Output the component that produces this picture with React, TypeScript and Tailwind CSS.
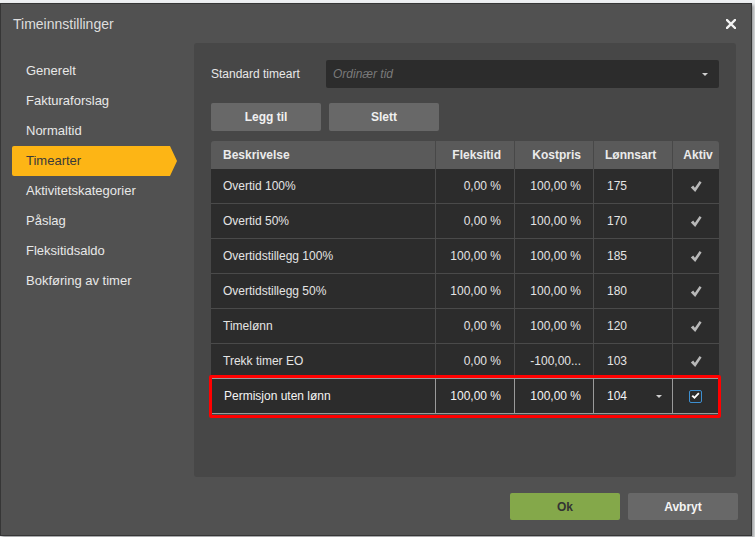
const menu = [
  "Generelt",
  "Fakturaforslag",
  "Normaltid",
  "Timearter",
  "Aktivitetskategorier",
  "Påslag",
  "Fleksitidsaldo",
  "Bokføring av timer",
];

const rows = [
  { name: "Overtid 100%", flex: "0,00 %", kost: "100,00 %", lonn: "175" },
  { name: "Overtid 50%", flex: "0,00 %", kost: "100,00 %", lonn: "170" },
  { name: "Overtidstillegg 100%", flex: "100,00 %", kost: "100,00 %", lonn: "185" },
  { name: "Overtidstillegg 50%", flex: "100,00 %", kost: "100,00 %", lonn: "180" },
  { name: "Timelønn", flex: "0,00 %", kost: "100,00 %", lonn: "120" },
  { name: "Trekk timer EO", flex: "0,00 %", kost: "-100,00...", lonn: "103" },
];

function Caret() {
  return (
    <svg width="6" height="3" viewBox="0 0 6 3" className="shrink-0">
      <path d="M0 0H6L3 3Z" fill="#d0d0d0" />
    </svg>
  );
}

function Check() {
  return (
    <svg width="12" height="13" viewBox="0 0 12 13">
      <path d="M0.8 7.4L3.2 5.4L4.9 7.8L9.6 1L11.6 2.6L5.2 12Z" fill="#b8b8b8" />
    </svg>
  );
}

export default function App() {
  return (
    <div
      className="w-[755px] h-[537px] bg-[#eef0f2] pt-[3px] overflow-hidden"
      style={{ fontFamily: '"Liberation Sans", Arial, sans-serif' }}
    >
      <div className="w-[752px] h-[533px] bg-[#515151] border border-[#363636] shadow-[2px_2px_3px_rgba(0,0,0,0.35)] flex flex-col">
        {/* title */}
        <div className="h-[39px] flex items-center justify-between pl-[12px] pr-[15px] shrink-0">
          <span className="text-[14px] text-[#dedede] mt-[1px]">Timeinnstillinger</span>
          <svg width="10" height="10" viewBox="0 0 10 10">
            <path d="M1 1L9 9M9 1L1 9" stroke="#f2f2f2" strokeWidth="2.4" strokeLinecap="square" />
          </svg>
        </div>

        <div className="flex shrink-0">
          {/* sidebar */}
          <div className="w-[193px] pt-[13px] pl-[11px] flex flex-col">
            {menu.map((m) =>
              m === "Timearter" ? (
                <div key={m} className="relative h-[30px] w-[158px] flex items-center pl-[14px] bg-[#fdb515] rounded-l-[2px] text-[13px] text-[#3a3a3a]">
                  {m}
                  <div className="absolute right-[-7px] top-0 w-0 h-0 border-y-[15px] border-y-transparent border-l-[7px] border-l-[#fdb515]" />
                </div>
              ) : (
                <div key={m} className="h-[30px] flex items-center pl-[14px] text-[13px] text-[#e8e8e8]">
                  {m}
                </div>
              )
            )}
          </div>

          {/* panel */}
          <div className="w-[542px] h-[434px] bg-[#474747] rounded-[3px] pt-[17px] pl-[17px] pr-[17px]">
            <div className="flex items-center h-[28px]">
              <span className="w-[115px] text-[12px] text-[#e8e8e8]">Standard timeart</span>
              <div className="flex-1 h-[28px] bg-[#2c2c2c] rounded-[2px] flex items-center justify-between pl-[7px] pr-[11px]">
                <span className="text-[12px] italic text-[#7a7a7a]">Ordinær tid</span>
                <Caret />
              </div>
            </div>

            <div className="flex gap-[8px] mt-[15px]">
              <div className="w-[110px] h-[28px] bg-[#686868] rounded-[2px] flex items-center justify-center text-[12px] font-bold text-[#f0f0f0]">
                Legg til
              </div>
              <div className="w-[110px] h-[28px] bg-[#686868] rounded-[2px] flex items-center justify-center text-[12px] font-bold text-[#f0f0f0]">
                Slett
              </div>
            </div>

            <div className="mt-[10px] w-[508px] text-[12px]">
              <div className="h-[28px] flex bg-[#5a5a5a] rounded-t-[3px] font-bold text-[#ebebeb]">
                <div className="w-[224px] flex items-center pl-[12px]">Beskrivelse</div>
                <div className="w-[79px] flex items-center justify-end pr-[13px] border-l border-[#484848]">Fleksitid</div>
                <div className="w-[79px] flex items-center justify-end pr-[12px] border-l border-[#484848]">Kostpris</div>
                <div className="w-[79px] flex items-center pl-[11px] border-l border-[#484848]">Lønnsart</div>
                <div className="w-[47px] flex items-center justify-center pl-[4px] border-l border-[#484848]">Aktiv</div>
              </div>

              {rows.map((r, i) => (
                <div
                  key={r.name}
                  className={`flex bg-[#2c2c2c] text-[#e4e4e4] ${i < rows.length - 1 ? "h-[35px] border-b border-[#4a4a4a]" : "h-[34px]"}`}
                >
                  <div className="w-[224px] flex items-center pl-[12px]">{r.name}</div>
                  <div className="w-[79px] flex items-center justify-end pr-[13px] border-l border-[#4a4a4a]">{r.flex}</div>
                  <div className="w-[79px] flex items-center justify-end pr-[12px] border-l border-[#4a4a4a]">{r.kost}</div>
                  <div className="w-[79px] flex items-center pl-[13px] border-l border-[#4a4a4a]">{r.lonn}</div>
                  <div className="w-[47px] flex items-center justify-center border-l border-[#4a4a4a]">
                    <Check />
                  </div>
                </div>
              ))}

              {/* row in edit mode */}
              <div className="relative flex h-[36px] bg-[#2c2c2c] text-[#f4f4f4] border border-[#9a9a9a]">
                <div className="w-[223px] flex items-center pl-[12px]">Permisjon uten lønn</div>
                <div className="w-[79px] flex items-center justify-end pr-[13px] border-l border-[#9a9a9a]">100,00 %</div>
                <div className="w-[79px] flex items-center justify-end pr-[12px] border-l border-[#9a9a9a]">100,00 %</div>
                <div className="w-[79px] flex items-center justify-between pl-[13px] pr-[10px] border-l border-[#9a9a9a]">
                  104
                  <Caret />
                </div>
                <div className="w-[46px] flex items-center justify-center border-l border-[#9a9a9a]">
                  <div className="w-[13px] h-[13px] rounded-[2px] border-[1.5px] border-[#3d8fd0] flex items-center justify-center">
                    <svg width="9" height="8" viewBox="0 0 9 8">
                      <path d="M0.5 4.2L2 3L3.4 4.6L7.2 0.5L8.5 1.7L3.5 7Z" fill="#ffffff" />
                    </svg>
                  </div>
                </div>
                <div className="absolute left-[-3px] right-[-3px] top-[-4px] bottom-[-5px] border-[3px] border-[#ff0000] rounded-[2px] pointer-events-none" />
              </div>
            </div>
          </div>
        </div>

        {/* footer */}
        <div className="flex justify-end gap-[8px] pr-[13px] mt-[16px]">
          <div className="w-[110px] h-[27px] bg-[#84a84a] rounded-[2px] flex items-center justify-center text-[12px] font-bold text-[#333333]">
            Ok
          </div>
          <div className="w-[110px] h-[27px] bg-[#686868] rounded-[2px] flex items-center justify-center text-[12px] font-bold text-[#f4f4f4]">
            Avbryt
          </div>
        </div>
      </div>
    </div>
  );
}
